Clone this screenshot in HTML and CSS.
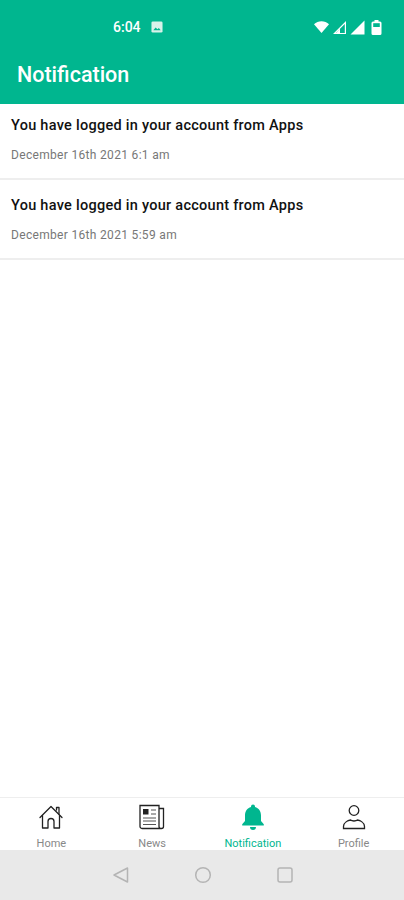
FILE: index.html
```html
<!DOCTYPE html>
<html lang="en">
<head>
    <meta charset="utf-8">
    <title>Notification</title>
    <link rel="stylesheet" href="styles.css">
</head>
<body>
<div class="screen">
    <header class="header">
        <div class="status">
            <div class="status-left">
                <span class="time">6:04</span>
                <svg class="status-img" width="12" height="12" viewBox="0 0 13 13">
                    <rect x="0.5" y="0.5" width="12" height="12" rx="1.5" fill="#d8f2ea"/>
                    <path d="M2.5 10l2.5-3 2 2 1.500-1.500 2 2.500z" fill="#00b68f"/>
                </svg>
            </div>
            <div class="status-right">
                <svg width="15" height="12" viewBox="0 0 15 12"><path d="M0 3.2C4 -0.8 11 -0.8 15 3.2L7.500 12z" fill="#fff"/></svg>
                <svg width="15" height="15" viewBox="0 0 15 15"><path d="M14 1v13H1z M12.800 4L3.800 12.900H12.800z" fill="#fff" fill-rule="evenodd"/><path d="M8 8.500v4.500H4z" fill="#fff"/></svg>
                <svg width="15" height="15" viewBox="0 0 15 15"><path d="M14.500 0.500v14H0.500z" fill="#fff"/></svg>
                <svg class="battery" width="11" height="15" viewBox="0 0 11 15"><path d="M3.500 0h4v1.500h1.500a1.500 1.500 0 0 1 1.500 1.500v10.500a1.500 1.500 0 0 1-1.500 1.500H2a1.500 1.500 0 0 1-1.500-1.500V3A1.500 1.500 0 0 1 2 1.500h1.500z" fill="#fff"/><rect x="2.200" y="3.200" width="6.600" height="3.800" fill="#00b68f"/></svg>
            </div>
        </div>
        <h1 class="title">Notification</h1>
    </header>

    <main class="list">
        <div class="item">
            <div class="item-title">You have logged in your account from Apps</div>
            <div class="item-date">December 16th 2021 6:1 am</div>
        </div>
        <div class="item">
            <div class="item-title">You have logged in your account from Apps</div>
            <div class="item-date">December 16th 2021 5:59 am</div>
        </div>
    </main>

    <nav class="tabs">
        <div class="tab">
            <svg width="26" height="26" viewBox="0 0 26 26" fill="none" stroke="#222" stroke-width="1.300" stroke-linejoin="round" stroke-linecap="round">
                <path d="M2 13.500L13 2.500l11 11"/>
                <path d="M18.500 6V3.500h2.500V10"/>
                <path d="M4.500 11.500V24h5.500V17.500a3 3 0 0 1 6 0V24h5.500V11.500"/>
            </svg>
            <span>Home</span>
        </div>
        <div class="tab">
            <svg width="26" height="26" viewBox="0 0 26 26" fill="none" stroke="#222" stroke-width="1.300">
                <path d="M20 4.500h4.500v18a2 2 0 0 1-2 2H3a2 2 0 0 1-2-2V1.500h19V22.500a2 2 0 0 0 2 2"/>
                <rect x="4" y="5" width="5.500" height="5.500" fill="#222" stroke="none"/>
                <path d="M12 6h5M12 10h5M4 14h13M4 17h13M4 20.500h13" stroke="#555" stroke-width="1.100"/>
            </svg>
            <span>News</span>
        </div>
        <div class="tab tab-active">
            <svg width="26" height="26" viewBox="0 0 26 26" fill="#00b68f">
                <path d="M13 0.500a2 2 0 0 1 2 2v0.600c3.800 1 6 4.200 6 8.400v5.500l2.800 3.200v1.300H2.200v-1.300L5 17v-5.500c0-4.200 2.200-7.400 6-8.400V2.500a2 2 0 0 1 2-2z"/>
                <path d="M10 23h6a3 3 0 0 1-6 0z"/>
            </svg>
            <span>Notification</span>
        </div>
        <div class="tab">
            <svg width="26" height="26" viewBox="0 0 26 26" fill="none" stroke="#222" stroke-width="1.300">
                <circle cx="13" cy="6.500" r="4.800"/>
                <path d="M2.500 24.500v-2c0-4 4.500-6 7-6.500 1.500 1.300 5.500 1.300 7 0 2.500 0.500 7 2.500 7 6.500v2z"/>
            </svg>
            <span>Profile</span>
        </div>
    </nav>

    <div class="system-nav">
        <svg width="18" height="18" viewBox="0 0 18 18" fill="none" stroke="#b4b4b4" stroke-width="1.500" stroke-linejoin="round"><path d="M15.500 2v14L2 9z"/></svg>
        <svg width="18" height="18" viewBox="0 0 18 18" fill="none" stroke="#b4b4b4" stroke-width="1.500"><circle cx="9" cy="9" r="7.300"/></svg>
        <svg width="18" height="18" viewBox="0 0 18 18" fill="none" stroke="#b4b4b4" stroke-width="1.500"><rect x="2" y="2" width="14" height="14" rx="2"/></svg>
    </div>
</div>
</body>
</html>
```

FILE: styles.css
```css
html, body {
    margin: 0;
    padding: 0;
}

body {
    font-family: Roboto, "Liberation Sans", sans-serif;
    background-color: white;
}

.screen {
    display: flex;
    flex-direction: column;
    height: 900px;
}

.header {
    height: 104px;
    box-sizing: border-box;
    background-color: #00b68f;
    color: white;
    padding-top: 18px;
}

.status {
    display: flex;
    justify-content: space-between;
    align-items: center;
    height: 18px;
    padding: 0 22px 0 113px;
}

.status-left, .status-right {
    display: flex;
    align-items: center;
}

.status-left {
    gap: 10px;
}

.status-right {
    gap: 3px;
}

.time {
    font-size: 14px;
    font-weight: 500;
}

.battery {
    margin-left: 3px;
}

.title {
    margin: 26px 0 0 17px;
    font-size: 21.5px;
    line-height: 26px;
    font-weight: 500;
}

.list {
    flex: 1;
}

.item {
    height: 80px;
    box-sizing: border-box;
    padding: 17px 11px 0;
    border-bottom: 2px solid #eeeeee;
}

.item:first-child {
    height: 76px;
    padding-top: 13px;
}

.item-title {
    font-size: 14.5px;
    line-height: 18px;
    font-weight: 500;
    letter-spacing: 0.27px;
    color: #111111;
}

.item-date {
    margin-top: 12px;
    font-size: 12px;
    line-height: 16px;
    letter-spacing: 0.32px;
    color: #777777;
}

.tabs {
    display: flex;
    height: 53px;
    box-sizing: border-box;
    border-top: 1px solid #eeeeee;
    padding: 6px 0 0 1px;
}

.tab {
    width: 101px;
    display: flex;
    flex-direction: column;
    align-items: center;
    gap: 7px;
    font-size: 11px;
    line-height: 13px;
    color: #888888;
}

.tab-active {
    color: #00b68f;
}

.system-nav {
    height: 50px;
    background-color: #e9e9e9;
    display: flex;
    justify-content: center;
    align-items: center;
    gap: 64px;
    padding-left: 2px;
}
```
